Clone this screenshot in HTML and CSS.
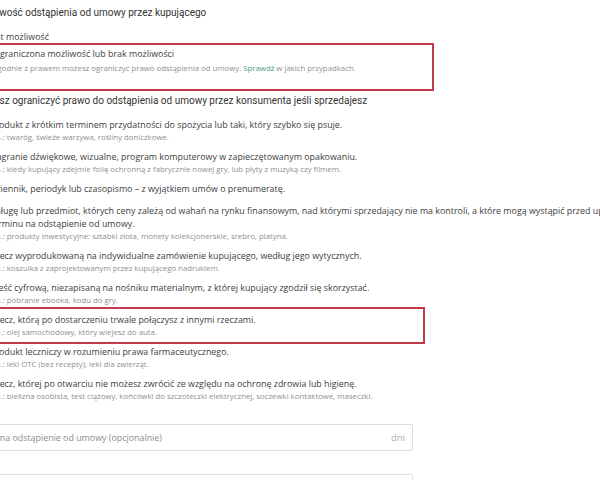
FILE: index.html
```html
<!DOCTYPE html>
<html lang="pl">
<head>
<meta charset="utf-8">
<title>Odstąpienie od umowy</title>
<link rel="stylesheet" href="styles.css">
</head>
<body>
<div class="page">
  <h2 class="title">Możliwość odstąpienia od umowy przez kupującego</h2>
  <div class="radios">
    <label class="radio"><span class="dot"></span><span class="rtext">Jest możliwość</span></label>
    <label class="radio radio-alt"><span class="dot on"></span><span class="rbody"><span class="rtext">Ograniczona możliwość lub brak możliwości</span><span class="hint">Zgodnie z prawem możesz ograniczyć prawo odstąpienia od umowy. <a class="link">Sprawdź</a> w jakich przypadkach.</span></span></label>
  </div>
  <h2 class="title title2">Możesz ograniczyć prawo do odstąpienia od umowy przez konsumenta jeśli sprzedajesz</h2>
  <ul class="list">
    <li class="item"><span class="box"></span><div class="body"><div class="main">Produkt z krótkim terminem przydatności do spożycia lub taki, który szybko się psuje.</div><div class="hint">Np.: twaróg, świeże warzywa, rośliny doniczkowe.</div></div></li>
    <li class="item"><span class="box"></span><div class="body"><div class="main">Nagranie dźwiękowe, wizualne, program komputerowy w zapieczętowanym opakowaniu.</div><div class="hint">Np.: kiedy kupujący zdejmie folię ochronną z fabrycznie nowej gry, lub płyty z muzyką czy filmem.</div></div></li>
    <li class="item"><span class="box"></span><div class="body"><div class="main">Dziennik, periodyk lub czasopismo – z wyjątkiem umów o prenumeratę.</div></div></li>
    <li class="item"><span class="box"></span><div class="body"><div class="main">Usługę lub przedmiot, których ceny zależą od wahań na rynku finansowym, nad którymi sprzedający nie ma kontroli, a które mogą wystąpić przed upływem terminu na odstąpienie od umowy.</div><div class="hint">Np.: produkty inwestycyjne: sztabki złota, monety kolekcjonerskie, srebro, platyna.</div></div></li>
    <li class="item"><span class="box"></span><div class="body"><div class="main">Rzecz wyprodukowaną na indywidualne zamówienie kupującego, według jego wytycznych.</div><div class="hint">Np.: koszulka z zaprojektowanym przez kupującego nadrukiem.</div></div></li>
    <li class="item"><span class="box"></span><div class="body"><div class="main">Treść cyfrową, niezapisaną na nośniku materialnym, z której kupujący zgodził się skorzystać.</div><div class="hint">Np.: pobranie ebooka, kodu do gry.</div></div></li>
    <li class="item"><span class="box"></span><div class="body"><div class="main">Rzecz, którą po dostarczeniu trwale połączysz z innymi rzeczami.</div><div class="hint">Np.: olej samochodowy, który wlejesz do auta.</div></div></li>
    <li class="item"><span class="box"></span><div class="body"><div class="main">Produkt leczniczy w rozumieniu prawa farmaceutycznego.</div><div class="hint">Np.: leki OTC (bez recepty), leki dla zwierząt.</div></div></li>
    <li class="item"><span class="box"></span><div class="body"><div class="main">Rzecz, której po otwarciu nie możesz zwrócić ze względu na ochronę zdrowia lub higienę.</div><div class="hint">Np.: bielizna osobista, test ciążowy, końcówki do szczoteczki elektrycznej, soczewki kontaktowe, maseczki.</div></div></li>
  </ul>
  <div class="field"><span class="ph">Termin na odstąpienie od umowy (opcjonalnie)</span><span class="unit">dni</span></div>
  <div class="field field2"></div>
</div>
<div class="mark mark1"></div>
<div class="mark mark2"></div>
</body>
</html>
```
FILE: styles.css
```css
html, body {
  margin: 0;
  padding: 0;
  background: #ffffff;
}
body {
  overflow: hidden;
  position: relative;
  height: 480px;
  font-family: "Open Sans", "Liberation Sans", sans-serif;
  color: #404040;
}
.page {
  margin-left: -25px;
  width: 683px;
}
.title {
  margin: 0;
  padding-top: 6px;
  font-family: Roboto, "Liberation Sans", sans-serif;
  font-weight: 400;
  font-size: 10px;
  line-height: 14px;
  color: #333333;
}
.title2 {
  padding-top: 0;
  margin-top: 19px;
}
.radios {
  margin-top: 10px;
  display: flex;
  flex-direction: column;
  gap: 3px;
}
.radio {
  display: flex;
  align-items: flex-start;
  gap: 4px;
  font-size: 8.9px;
  line-height: 14px;
}
.radio-alt {
  padding-left: 4px;
}
.dot {
  flex: none;
  width: 10px;
  height: 10px;
  margin-top: 2px;
  border: 1px solid #bbbbbb;
  border-radius: 50%;
  box-sizing: border-box;
}
.rbody {
  display: flex;
  flex-direction: column;
}
.hint {
  font-size: 7.8px;
  line-height: 13px;
  color: #8f8f8f;
}
.radio .hint {
  line-height: 14px;
}
.link {
  color: #3f9c7f;
  text-decoration: none;
}
.list {
  list-style: none;
  margin: 10px 0 0;
  padding: 0;
  display: flex;
  flex-direction: column;
  gap: 6px;
}
.item {
  display: flex;
  align-items: flex-start;
  gap: 4px;
  min-height: 16px;
}
.box {
  flex: none;
  width: 11px;
  height: 11px;
  margin-top: 1px;
  border: 1px solid #bbbbbb;
  border-radius: 2px;
  box-sizing: border-box;
}
.body {
  flex: 1;
}
.main {
  font-size: 8.9px;
  line-height: 13px;
  color: #404040;
}
.field {
  margin-top: 21px;
  margin-left: -13px;
  width: 451px;
  height: 27px;
  box-sizing: border-box;
  border: 1px solid #dddddd;
  border-radius: 2px;
  display: flex;
  align-items: center;
  justify-content: space-between;
  padding: 0 7px 0 5px;
  font-size: 8.9px;
  color: #8c8c8c;
}
.unit {
  color: #aaaaaa;
  font-size: 9.5px;
}
.field2 {
  margin-top: 23px;
}
.mark {
  position: absolute;
  border: 2px solid #c23b4b;
  box-sizing: border-box;
  pointer-events: none;
}
.mark1 {
  left: -6px;
  top: 43px;
  width: 440px;
  height: 48px;
}
.mark2 {
  left: -6px;
  top: 307px;
  width: 431px;
  height: 37px;
}
```
